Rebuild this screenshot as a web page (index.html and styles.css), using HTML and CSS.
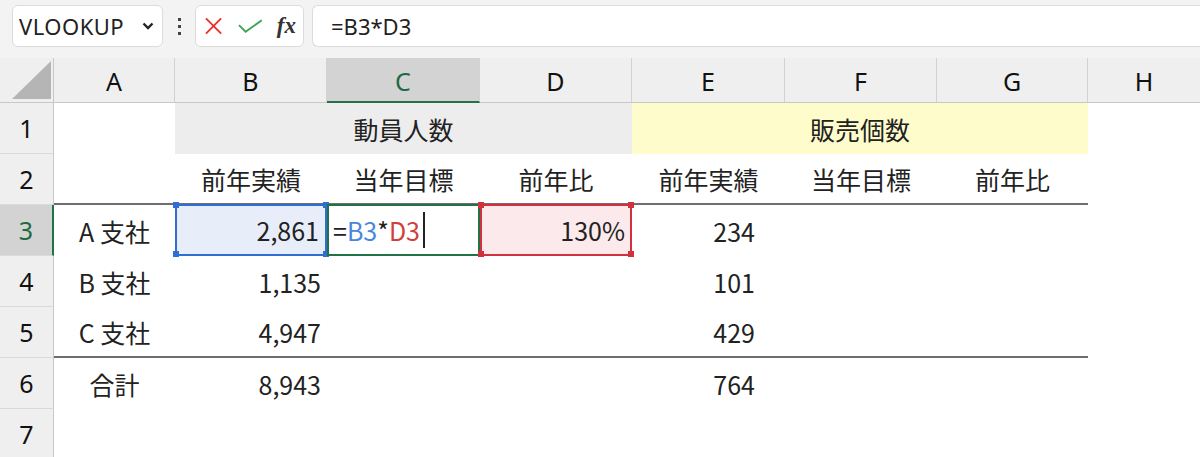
FILE: index.html
```html
<!DOCTYPE html>
<html lang="ja">

<head>
  <meta charset="UTF-8">
  <meta name="viewport" content="width=device-width, initial-scale=1.0">
  <title>VLOOKUP</title>
  <link rel="stylesheet" href="styles.css">
</head>

<body>
  <!-- formula bar -->
  <div class="toolbar">
    <div class="name-box">
      <span>VLOOKUP</span>
      <svg width="12" height="8" viewBox="0 0 12 8"><path d="M1.5 1.5 L6 6 L10.5 1.5" fill="none" stroke="#222" stroke-width="2.4"/></svg>
    </div>
    <div class="dots"><i></i><i></i><i></i></div>
    <div class="fx-box">
      <svg width="18" height="18" viewBox="0 0 18 18"><path d="M1 1 L17 17 M17 1 L1 17" stroke="#e8332f" stroke-width="2"/></svg>
      <svg width="26" height="14" viewBox="0 0 26 14"><path d="M1 6 L8 13 L25 1" fill="none" stroke="#3ea455" stroke-width="2"/></svg>
      <span class="fx">fx</span>
    </div>
    <div class="formula">=B3*D3</div>
  </div>

  <!-- sheet -->
  <div class="sheet">
    <div class="corner"><div class="tri"></div></div>
    <div class="ch">A</div>
    <div class="ch">B</div>
    <div class="ch active">C</div>
    <div class="ch">D</div>
    <div class="ch">E</div>
    <div class="ch">F</div>
    <div class="ch">G</div>
    <div class="ch end">H</div>

    <div class="rh">1</div>
    <div class="cell"></div>
    <div class="cell span3 grey">動員人数</div>
    <div class="cell span3 yellow">販売個数</div>
    <div class="cell"></div>

    <div class="rh">2</div>
    <div class="cell rule"></div>
    <div class="cell rule center">前年実績</div>
    <div class="cell rule center">当年目標</div>
    <div class="cell rule center">前年比</div>
    <div class="cell rule center">前年実績</div>
    <div class="cell rule center">当年目標</div>
    <div class="cell rule center">前年比</div>
    <div class="cell"></div>

    <div class="rh active">3</div>
    <div class="cell center">A 支社</div>
    <div class="cell num ref-blue">2,861</div>
    <div class="cell edit">=<span class="b">B3</span>*<span class="r">D3</span><span class="caret"></span></div>
    <div class="cell num ref-red">130%</div>
    <div class="cell num far">234</div>
    <div class="cell"></div>
    <div class="cell"></div>
    <div class="cell"></div>

    <div class="rh">4</div>
    <div class="cell center">B 支社</div>
    <div class="cell num">1,135</div>
    <div class="cell"></div>
    <div class="cell"></div>
    <div class="cell num far">101</div>
    <div class="cell"></div>
    <div class="cell"></div>
    <div class="cell"></div>

    <div class="rh">5</div>
    <div class="cell center rule">C 支社</div>
    <div class="cell num rule">4,947</div>
    <div class="cell rule"></div>
    <div class="cell rule"></div>
    <div class="cell num far rule">429</div>
    <div class="cell rule"></div>
    <div class="cell rule"></div>
    <div class="cell"></div>

    <div class="rh">6</div>
    <div class="cell center">合計</div>
    <div class="cell num">8,943</div>
    <div class="cell"></div>
    <div class="cell"></div>
    <div class="cell num far">764</div>
    <div class="cell"></div>
    <div class="cell"></div>
    <div class="cell"></div>

    <div class="rh">7</div>
  </div>
</body>

</html>
```

FILE: styles.css
```css
* {
  box-sizing: border-box;
}

body {
  margin: 0;
  height: 457px;
  overflow: hidden;
  background: #fff;
  font-family: "Noto Sans CJK JP", "Noto Sans", sans-serif;
  color: #222;
}

/* Formula bar */
.toolbar {
  display: flex;
  align-items: center;
  height: 58px;
  padding: 0 0 6px 12px;
  background: #f3f3f3;
  font-family: "Noto Sans", sans-serif;
}

.name-box,
.fx-box,
.formula {
  height: 42px;
  background: #fff;
  border: 1px solid #dcdcdc;
  border-radius: 6px;
  display: flex;
  align-items: center;
}

.name-box {
  width: 151px;
  padding: 0 8px 0 6px;
  justify-content: space-between;
  font-size: 22px;
  letter-spacing: 0.5px;
  color: #222;
}

.dots {
  width: 32px;
  display: flex;
  flex-direction: column;
  align-items: center;
  gap: 4px;
}

.dots i {
  width: 3px;
  height: 3px;
  background: #444;
}

.fx-box {
  width: 109px;
  padding: 0 7px 0 9px;
  gap: 16px;
}

.fx {
  font-family: "Liberation Serif", serif;
  font-style: italic;
  font-weight: bold;
  font-size: 23px;
  color: #333;
  margin-left: -2px;
}

.formula {
  flex: 1;
  margin-left: 8px;
  border-right: none;
  border-radius: 6px 0 0 6px;
  padding-left: 18px;
  font-size: 22px;
}

/* Sheet grid */
.sheet {
  display: grid;
  grid-template-columns: 54px 121px 152px 153px 152px 153px 152px 151px 1fr;
  grid-template-rows: 45px repeat(7, 51px);
}

.corner,
.ch,
.rh {
  background: #efefef;
  font-family: "Noto Sans", sans-serif;
  font-size: 25px;
  color: #111;
  display: flex;
  align-items: center;
  justify-content: center;
}

.corner {
  border-right: 1px solid #c8c8c8;
  border-bottom: 1px solid #c8c8c8;
  align-items: flex-end;
  justify-content: flex-end;
  padding: 0 2px 3px 0;
}

.tri {
  width: 0;
  height: 0;
  border-left: 39px solid transparent;
  border-bottom: 38px solid #b5b5b5;
}

.ch {
  border-right: 1px solid #d2d2d2;
  border-bottom: 1px solid #c8c8c8;
  padding-top: 2px;
}

.ch.end {
  border-right: none;
}

.ch.active {
  background: #d3d3d3;
  color: #1e6b41;
  border-bottom: 2px solid #217346;
}

.rh {
  grid-column: 1;
  border-right: 1px solid #c8c8c8;
  border-bottom: 1px solid #dadada;
}

.rh.active {
  background: #d3d3d3;
  color: #1e6b41;
  border-right: 2px solid #217346;
}

.cell {
  position: relative;
  display: flex;
  align-items: center;
  font-size: 25px;
  color: #222;
  padding: 0 6px;
}

.span3 {
  grid-column: span 3;
  justify-content: center;
}

.grey {
  background: #ededed;
}

.yellow {
  background: #fffccc;
}

.center {
  justify-content: center;
}

.num {
  justify-content: flex-end;
}

.far {
  padding-right: 30px;
}

/* border under header row and above total row */
.rule {
  border-bottom: 2px solid #6e6e6e;
}

/* range references shown while editing */
.ref-blue,
.ref-red,
.edit {
  border: 2px solid;
  margin-top: -1px;
}

.ref-blue {
  background: #e8eef9;
  border-color: #2f6fd2;
}

.ref-red {
  background: #fbe9eb;
  border-color: #d0313c;
  padding-right: 5px;
}

.edit {
  border-color: #217346;
  padding-left: 4px;
}

.edit .b {
  color: #4a86e0;
}

.edit .r {
  color: #d0403c;
}

.caret {
  width: 2px;
  height: 36px;
  background: #222;
  margin-left: 3px;
}

.ref-blue::before,
.ref-blue::after,
.ref-red::before,
.ref-red::after {
  content: "";
  position: absolute;
  top: -4px;
  width: 6px;
  height: 6px;
}

.ref-blue::before,
.ref-red::before {
  left: -4px;
}

.ref-blue::after,
.ref-red::after {
  right: -4px;
}

.ref-blue::before,
.ref-blue::after {
  background: #2f6fd2;
  box-shadow: 0 49px 0 #2f6fd2;
}

.ref-red::before,
.ref-red::after {
  background: #d0313c;
  box-shadow: 0 49px 0 #d0313c;
}
```
